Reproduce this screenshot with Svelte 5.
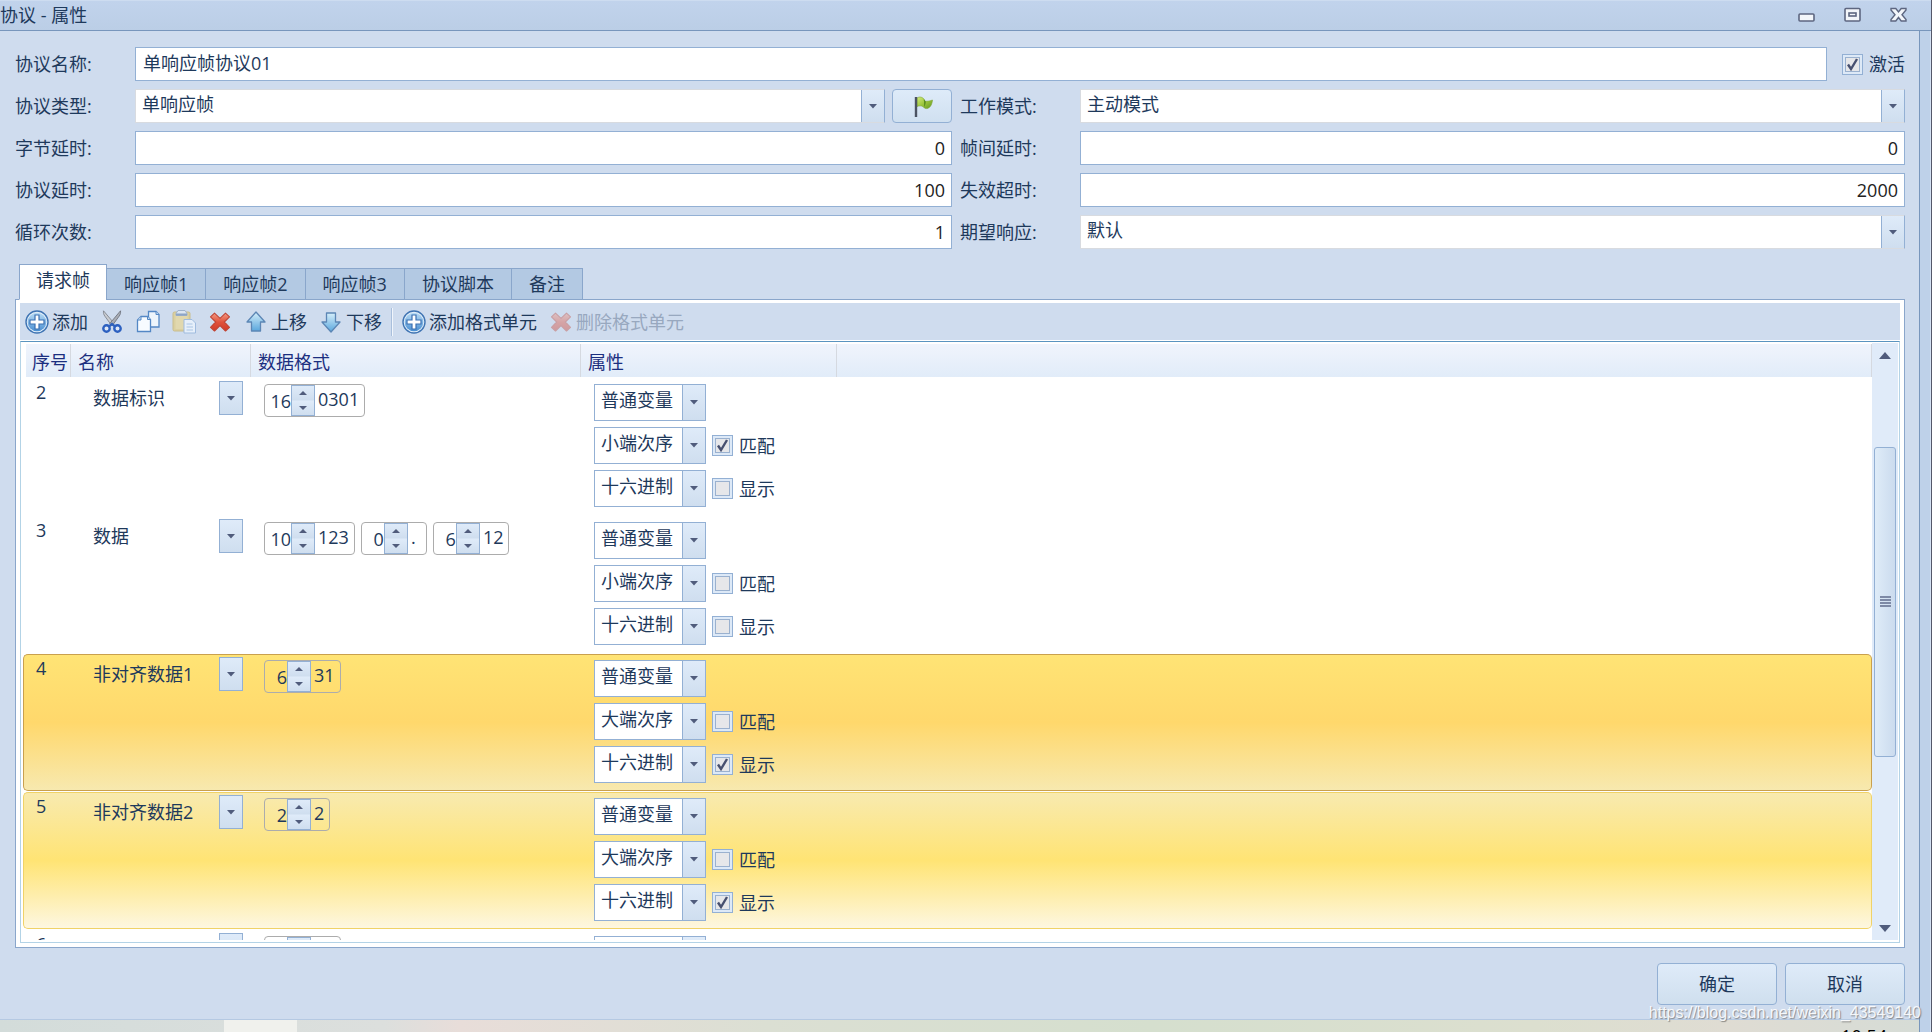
<script>
    let protocol = $state({
        name: "单响应帧协议01",
        active: true,
        type: "单响应帧",
        mode: "主动模式",
        byteDelay: 0,
        frameDelay: 0,
        delay: 100,
        timeout: 2000,
        loops: 1,
        expect: "默认"
    });

    let tabs = ["请求帧", "响应帧1", "响应帧2", "响应帧3", "协议脚本", "备注"];
    let activeTab = $state(0);
    let selected = $state(4);

    let rows = $state([
        { id: 2, name: "数据标识", parts: [{ size: 16, text: "0301" }], kind: "普通变量", order: "小端次序", base: "十六进制", match: true, show: false },
        { id: 3, name: "数据", parts: [{ size: 10, text: "123" }, { size: 0, text: "." }, { size: 6, text: "12" }], kind: "普通变量", order: "小端次序", base: "十六进制", match: false, show: false },
        { id: 4, name: "非对齐数据1", parts: [{ size: 6, text: "31" }], kind: "普通变量", order: "大端次序", base: "十六进制", match: false, show: true },
        { id: 5, name: "非对齐数据2", parts: [{ size: 2, text: "2" }], kind: "普通变量", order: "大端次序", base: "十六进制", match: false, show: true },
        { id: 6, name: "", parts: [{ size: 8, text: "12" }], kind: "普通变量", order: "大端次序", base: "十六进制", match: false, show: true }
    ]);
</script>

{#snippet plusIcon()}
    <svg class="icon" viewBox="0 0 24 24" aria-hidden="true">
        <defs>
            <linearGradient id="plus-fill" x1="0" y1="0" x2="0" y2="1">
                <stop offset="0" stop-color="#b9dcf5" />
                <stop offset="1" stop-color="#4a8fd2" />
            </linearGradient>
        </defs>
        <circle cx="12" cy="12" r="11" fill="#e4f0fa" stroke="#3f74b3" stroke-width="1.4" />
        <circle cx="12" cy="12" r="9.3" fill="url(#plus-fill)" />
        <path d="M10 5h4v5h5v4h-5v5h-4v-5H5v-4h5z" fill="#fff" stroke="#3b70b2" stroke-width="1.2" />
    </svg>
{/snippet}

{#snippet crossIcon()}
    <svg class="icon" viewBox="0 0 24 24" aria-hidden="true">
        <defs>
            <linearGradient id="cross-fill" x1="0" y1="0" x2="0" y2="1">
                <stop offset="0" stop-color="#f39a84" />
                <stop offset="0.5" stop-color="#e0523c" />
                <stop offset="1" stop-color="#cf3a28" />
            </linearGradient>
        </defs>
        <path d="M6.5 3.2 12 8.4l5.5-5.2 4 3.6L16.3 12l5.2 5.3-4 3.7L12 15.7 6.5 21l-4-3.7L7.7 12 2.5 6.8z" fill="url(#cross-fill)" stroke="#c04536" stroke-width="1.1" stroke-linejoin="round" />
    </svg>
{/snippet}

{#snippet arrowIcon(down)}
    <svg class="icon" viewBox="0 0 24 24" aria-hidden="true">
        <defs>
            <linearGradient id="arrow-fill" x1="0" y1="0" x2="0" y2="1">
                <stop offset="0" stop-color="#d5eefa" />
                <stop offset="1" stop-color="#5aa7dd" />
            </linearGradient>
        </defs>
        {#if down}
            <path d="M12 22 3 12h4.5V3h9v9H21z" fill="url(#arrow-fill)" stroke="#5c86b5" stroke-width="1.3" stroke-linejoin="round" />
        {:else}
            <path d="M12 2 21 12h-4.5v9h-9v-9H3z" fill="url(#arrow-fill)" stroke="#5c86b5" stroke-width="1.3" stroke-linejoin="round" />
        {/if}
    </svg>
{/snippet}

{#snippet combo(row, key, options)}
    <select class="combo" aria-label={key} bind:value={row[key]}>
        {#each options as option}
            <option>{option}</option>
        {/each}
    </select>
{/snippet}

<div class="window">
    <header class="titlebar">
        <h1>协议 - 属性</h1>
        <div class="window-buttons">
            <button aria-label="最小化">
                <svg viewBox="0 0 17 16"><rect x="1" y="7" width="15" height="7" rx="1" fill="#f3f6fa" stroke="#5d6680" stroke-width="1.6" /></svg>
            </button>
            <button aria-label="最大化">
                <svg viewBox="0 0 17 16">
                    <rect x="1" y="1.5" width="15" height="12.5" rx="1" fill="#f3f6fa" stroke="#5d6680" stroke-width="1.6" />
                    <rect x="5" y="6" width="7" height="3" fill="#f3f6fa" stroke="#5d6680" stroke-width="1.6" />
                </svg>
            </button>
            <button aria-label="关闭">
                <svg viewBox="0 0 17 16"><path d="M1 1.5h4.8l2.7 3.4 2.7-3.4H16V3l-4 4.7 4 4.8V14h-4.8l-2.7-3.5L5.8 14H1v-1.5l4-4.8L1 3z" fill="#f3f6fa" stroke="#5d6680" stroke-width="1.4" /></svg>
            </button>
        </div>
    </header>

    <div class="frame">
        <div class="column">
            <main>
                <section class="form">
                    <div class="field wide">
                        <label for="name">协议名称:</label>
                        <input id="name" type="text" bind:value={protocol.name} />
                        <label class="check"><input type="checkbox" bind:checked={protocol.active} />激活</label>
                    </div>
                    <div class="field left">
                        <label for="type">协议类型:</label>
                        <select id="type" class="plain" bind:value={protocol.type}>
                            <option>单响应帧</option>
                            <option>多响应帧</option>
                        </select>
                        <button class="flag" aria-label="标记">
                            <svg viewBox="-2 -1 24 24" aria-hidden="true">
                                <defs>
                                    <linearGradient id="flag-fill" x1="0" y1="0" x2="1" y2="1">
                                        <stop offset="0" stop-color="#d3ec7a" />
                                        <stop offset="0.5" stop-color="#9cc63c" />
                                        <stop offset="1" stop-color="#5f9420" />
                                    </linearGradient>
                                </defs>
                                <path d="M5 3c3-2 5.500-.5 7 1v2c2.500.6 5.500.2 8.500-1-.3 3.500-1.500 7-4.500 8.300-1.800.7-3.500.1-4.500-1.300-2-1.600-4.500-1.300-6.500-.5z" fill="url(#flag-fill)" stroke="#7da436" stroke-width=".6" />
                                <path d="M12 4.100v8l-.5.400c1.500-1.500 2.300-3.500 2.400-5.700z" fill="#5c8f1f" />
                                <path d="M4 2v20" stroke="#4b5362" stroke-width="2.4" />
                            </svg>
                        </button>
                    </div>
                    <div class="field">
                        <label for="mode">工作模式:</label>
                        <select id="mode" class="plain" bind:value={protocol.mode}>
                            <option>主动模式</option>
                            <option>被动模式</option>
                        </select>
                    </div>
                    <div class="field left">
                        <label for="byte-delay">字节延时:</label>
                        <input id="byte-delay" class="num" type="text" bind:value={protocol.byteDelay} />
                    </div>
                    <div class="field">
                        <label for="frame-delay">帧间延时:</label>
                        <input id="frame-delay" class="num" type="text" bind:value={protocol.frameDelay} />
                    </div>
                    <div class="field left">
                        <label for="delay">协议延时:</label>
                        <input id="delay" class="num" type="text" bind:value={protocol.delay} />
                    </div>
                    <div class="field">
                        <label for="timeout">失效超时:</label>
                        <input id="timeout" class="num" type="text" bind:value={protocol.timeout} />
                    </div>
                    <div class="field left">
                        <label for="loops">循环次数:</label>
                        <input id="loops" class="num" type="text" bind:value={protocol.loops} />
                    </div>
                    <div class="field">
                        <label for="expect">期望响应:</label>
                        <select id="expect" class="plain" bind:value={protocol.expect}>
                            <option>默认</option>
                        </select>
                    </div>
                </section>

                <nav class="tabs">
                    {#each tabs as tab, i}
                        <button class:active={i === activeTab} onclick={() => (activeTab = i)}>{tab}</button>
                    {/each}
                </nav>

                <section class="panel">
                    <div class="toolbar">
                        <button>{@render plusIcon()}添加</button>
                        <button aria-label="剪切">
                            <svg class="icon" viewBox="0 0 24 24" aria-hidden="true">
                                <path d="M3.500.8c-.3 2 .2 3.800 1.300 5.300l6.700 9.200 2.200-2.500z" fill="#c9ccd1" stroke="#777c85" stroke-width=".8" />
                                <path d="M20.500.8c.3 2-.2 3.800-1.300 5.300l-7.200 9.900-2.200-2.500z" fill="#a9adb5" stroke="#666b75" stroke-width=".8" />
                                <path d="M9.500 14.500 12 12.500l2.500 2 2 1.500-1.500 2-3-2.500L9 18l-1.500-2z" fill="#2e61bd" />
                                <circle cx="6.5" cy="18.5" r="3.2" fill="#dfe8f6" stroke="#2c60c0" stroke-width="2.4" />
                                <circle cx="17.5" cy="18.5" r="3.2" fill="#dfe8f6" stroke="#2c60c0" stroke-width="2.4" />
                            </svg>
                        </button>
                        <button aria-label="复制">
                            <svg class="icon" viewBox="0 0 24 24" aria-hidden="true">
                                <path d="M12.5 1.5H20l3 3V17H12.5z" fill="#edf5fc" stroke="#5387c5" stroke-width="1.3" />
                                <path d="M20 1.5v3h3" fill="#c4dbf2" stroke="#5387c5" />
                                <path d="M5 6.5h6.5l3 3v12h-13V10z" fill="#f7fbff" stroke="#5387c5" stroke-width="1.3" />
                                <path d="M5 6.500V10H1.500M11.500 6.500v3h3" fill="#c4dbf2" stroke="#5387c5" />
                            </svg>
                        </button>
                        <button aria-label="粘贴" disabled>
                            <svg class="icon" viewBox="0 0 24 24" aria-hidden="true">
                                <rect x="1" y="2" width="17" height="19" rx="1.5" fill="#dbd0a0" stroke="#c9bd8d" />
                                <rect x="3.5" y="5" width="12" height="14" fill="#e1d8ae" />
                                <path d="M4 3.500 6 .5h7l2 3v2H4z" fill="#dce6f2" stroke="#9fb2cb" />
                                <path d="M4 4.500h11" stroke="#8da5c6" stroke-width="2" />
                                <path d="M12 9.500h8l3.500 3.500v10H12z" fill="#e6effa" stroke="#9fbbde" />
                                <path d="M14.500 14h6M14.500 17h6.500M14.500 20h6.500" stroke="#aac5e3" stroke-width="1.2" />
                            </svg>
                        </button>
                        <button aria-label="删除">{@render crossIcon()}</button>
                        <button>{@render arrowIcon(false)}上移</button>
                        <button>{@render arrowIcon(true)}下移</button>
                        <span class="separator"></span>
                        <button>{@render plusIcon()}添加格式单元</button>
                        <button class="faded" disabled>{@render crossIcon()}删除格式单元</button>
                    </div>

                    <div class="grid">
                        <div class="scroll-area">
                            <table>
                                <colgroup>
                                    <col class="c-id" /><col class="c-name" /><col class="c-format" /><col class="c-props" /><col />
                                </colgroup>
                                <thead>
                                    <tr><th>序号</th><th>名称</th><th>数据格式</th><th>属性</th><th></th></tr>
                                </thead>
                                <tbody>
                                    {#each rows as row (row.id)}
                                        <tr class:selected={row.id === selected} class:related={row.id === 5} onclick={() => (selected = row.id)}>
                                            <td class="id">{row.id}</td>
                                            <td class="name">
                                                <select class="name-combo" aria-label="名称" bind:value={row.name}>
                                                    <option>{row.name}</option>
                                                </select>
                                            </td>
                                            <td>
                                                <div class="formats">
                                                    {#each row.parts as part}
                                                        <div class="format" class:long={part.size > 9}>
                                                            <input type="text" aria-label="位数" bind:value={part.size} />
                                                            <div class="spin">
                                                                <button aria-label="增加" onclick={() => part.size++}><i class="up"></i></button>
                                                                <button aria-label="减少" onclick={() => part.size--}><i class="dn"></i></button>
                                                            </div>
                                                            <span>{part.text}</span>
                                                        </div>
                                                    {/each}
                                                </div>
                                            </td>
                                            <td>
                                                <div class="props">
                                                    <div>{@render combo(row, "kind", ["普通变量"])}</div>
                                                    <div>
                                                        {@render combo(row, "order", ["小端次序", "大端次序"])}
                                                        <label class="check"><input type="checkbox" bind:checked={row.match} />匹配</label>
                                                    </div>
                                                    <div>
                                                        {@render combo(row, "base", ["十六进制", "十进制"])}
                                                        <label class="check"><input type="checkbox" bind:checked={row.show} />显示</label>
                                                    </div>
                                                </div>
                                            </td>
                                            <td></td>
                                        </tr>
                                    {/each}
                                </tbody>
                            </table>
                        </div>
                        <div class="scrollbar">
                            <button aria-label="向上滚动"><i class="up"></i></button>
                            <div class="track">
                                <div class="thumb"><i></i><i></i><i></i><i></i></div>
                            </div>
                            <button aria-label="向下滚动"><i class="dn"></i></button>
                        </div>
                    </div>
                </section>

                <footer>
                    <button>确定</button>
                    <button>取消</button>
                </footer>
            </main>
            <div class="taskbar">
                <span class="task"></span>
                <time>10:54</time>
            </div>
        </div>
    </div>
    <div class="watermark">https://blog.csdn.net/weixin_43549140</div>
</div>

<style>
    :global(body) { margin: 0; }
    .window {
        position: relative;
        display: flex;
        flex-direction: column;
        height: 100vh;
        box-sizing: border-box;
        border-right: 1px solid #55586a;
        background: #bed1e9;
        color: #1e395b;
        font: 18px/24px "Open Sans", "Noto Sans CJK SC", sans-serif;
        overflow: hidden;
    }
    .window * { box-sizing: border-box; }
    button, input, select { font: inherit; color: inherit; margin: 0; padding: 0; }
    button { border: 0; background: none; }

    .titlebar {
        display: flex;
        align-items: center;
        justify-content: space-between;
        height: 31px;
        padding: 0 24px 2px 0;
        border-top: 1px solid #cddcf0;
        border-bottom: 1px solid #7896bc;
        background: linear-gradient(#c1d3ec, #bbcee6);
    }
    h1 { margin: 0; font-size: 18px; line-height: 24px; font-weight: 400; }
    .window-buttons { display: flex; gap: 29px; }
    .window-buttons button { width: 17px; height: 16px; }
    .window-buttons svg { display: block; width: 17px; height: 16px; }

    .frame { flex: 1; min-height: 0; display: flex; padding-right: 10px; border-right: 1px solid #d3e0f2; }
    .column { flex: 1; min-width: 0; display: flex; flex-direction: column; border-right: 1px solid #7896bc; }
    main {
        flex: 1;
        min-height: 0;
        display: flex;
        flex-direction: column;
        padding: 16px 14px 14px 15px;
        border-bottom: 1px solid #b5c9e2;
        background: #cfdcee;
    }

    .form { display: grid; grid-template-columns: 1fr 1fr; row-gap: 8px; }
    .field { display: flex; align-items: center; height: 34px; }
    .field.wide { grid-column: span 2; }
    .field.left { padding-right: 8px; }
    .field > label:first-child { width: 120px; flex: none; }
    .field > input, .field > select { flex: 1; min-width: 0; height: 34px; }
    .field > input { padding: 0 7px 4px; border: 1px solid #93b0d4; background: #fff; outline: 0; }
    .field > input.num { text-align: right; color: #222; padding-right: 6px; padding-bottom: 0; }

    select {
        appearance: none;
        border: 1px solid #93b0d4;
        border-radius: 0;
        outline: 0;
        background:
            url("data:image/svg+xml,%3Csvg xmlns='http://www.w3.org/2000/svg' width='8' height='5'%3E%3Cpath d='M0 0h8L4 4.500z' fill='%23505c7c'/%3E%3C/svg%3E") right 7px center / 8px 5px no-repeat,
            linear-gradient(#93b0d4, #93b0d4) right 22px top / 1px 100% no-repeat,
            linear-gradient(#dfebf9, #cfdeef) right top / 22px 100% no-repeat,
            #fff;
    }
    select.plain {
        padding: 0 30px 4px 6px;
        border-color: #d8dbe0;
        border-right-color: #93b0d4;
    }

    .check { display: flex; align-items: center; gap: 6px; }
    .wide .check { margin-left: 15px; }
    .check input {
        appearance: none;
        width: 21px;
        height: 21px;
        border: 1px solid #93b0d4;
        background: #dde9f7;
        padding: 2px;
    }
    .check input::before {
        content: "";
        display: block;
        width: 15px;
        height: 15px;
        border: 1px solid #9ab1cf;
        background: #e6e7ea;
        box-sizing: border-box;
    }
    .check input:checked::before {
        background: #e6e7ea url("data:image/svg+xml,%3Csvg xmlns='http://www.w3.org/2000/svg' width='13' height='13'%3E%3Cpath d='M2 6.500l3 4.500L11 1' fill='none' stroke='%23475070' stroke-width='2.400'/%3E%3C/svg%3E") center / 13px 13px no-repeat;
    }

    .flag {
        display: grid;
        place-items: center;
        width: 60px;
        height: 34px;
        margin-left: 7px;
        border: 1px solid #93b0d4;
        border-radius: 4px;
        background: linear-gradient(#deebf9, #d0e0f0);
    }
    .flag svg { width: 24px; height: 24px; }

    .tabs { display: flex; align-items: flex-end; margin: 15px 0 -1px 4px; position: relative; }
    .tabs button {
        height: 32px;
        margin-left: -1px;
        padding: 0 17px;
        border: 1px solid #8aa6cb;
        background: #b3c9e3;
    }
    .tabs button.active { height: 36px; margin-left: 0; padding: 0 16px 4px; border-bottom-color: #fff; background: #fff; }

    .panel {
        flex: 1;
        min-height: 0;
        display: flex;
        flex-direction: column;
        padding: 3px 4px 4px;
        border: 1px solid #8aa6cb;
        background: #fff;
    }
    .toolbar { display: flex; align-items: center; gap: 12px; height: 37px; padding-left: 5px; background: #cfdcee; }
    .toolbar button { display: flex; align-items: center; gap: 3px; }
    .icon { width: 24px; height: 24px; flex: none; }
    .separator { width: 2px; height: 28px; margin: 0 -3px; border-left: 1px solid #a9bfdc; background: #f0f5fb; }
    .faded { color: #98a8bf; }
    .faded .icon { opacity: 0.4; }

    .grid {
        flex: 1;
        min-height: 0;
        display: flex;
        margin-top: 1px;
        padding: 1px 1px 2px 2px;
        border: 1px solid #b3d3e6;
        border-top-color: #5a94bf;
    }
    .scroll-area { flex: 1; min-width: 0; overflow: hidden; }
    table { width: 100%; table-layout: fixed; border-collapse: separate; border-spacing: 0 1px; }
    .c-id { width: 48px; }
    .c-name { width: 180px; }
    .c-format { width: 330px; }
    .c-props { width: 256px; }
    th {
        height: 33px;
        padding: 2px 0 0 7px;
        border-right: 1px solid #d5d9e0;
        background: linear-gradient(#f0f4fc, #e1ecf9);
        color: #1c2f80;
        font-weight: 400;
        text-align: left;
        white-space: nowrap;
    }
    th:first-child { padding-left: 6px; border-left: 3px solid #fff; }
    td { height: 137px; padding: 0; border: 1px solid transparent; border-width: 1px 0; vertical-align: top; }
    td:first-child { border-left-width: 1px; border-radius: 5px 0 0 5px; }
    td:last-child { border-right-width: 1px; border-radius: 0 5px 5px 0; }
    .related td { background: linear-gradient(#f8eab0, #ffe474 50%, #fdf7e2) border-box; border-color: #f0d267; }
    .selected td { background: linear-gradient(#ffe475, #ffd86c 50%, #f7e9b0) border-box; border-color: #c9a04e; }
    td.id { padding: 1px 0 0 12px; }
    td.name { padding: 2px 8px 0 22px; }
    .name-combo {
        width: 150px;
        height: 34px;
        border: 0;
        padding-right: 26px;
        background:
            url("data:image/svg+xml,%3Csvg xmlns='http://www.w3.org/2000/svg' width='8' height='5'%3E%3Cpath d='M0 0h8L4 4.500z' fill='%23505c7c'/%3E%3C/svg%3E") right 8px center / 8px 5px no-repeat,
            linear-gradient(#dfebf9, #cfdeef) right 1px center / 22px 32px no-repeat,
            linear-gradient(#93b0d4, #93b0d4) right center / 24px 34px no-repeat;
    }

    .formats { display: flex; gap: 6px; padding: 5px 0 0 13px; }
    .format { display: flex; height: 33px; border: 1px solid #acacac; border-radius: 4px; }
    .format input { width: 22px; min-width: 0; border: 0; background: none; text-align: right; outline: 0; }
    .format.long input { width: 26px; }
    .format span { min-width: 18px; padding: 2px 5px 0 3px; }
    .spin { display: flex; flex-direction: column; width: 24px; border: 1px solid #93b0d4; background: linear-gradient(#dfebf9, #cfdeef 48%, #dfebf9 52%, #cfdeef); }
    .spin button { flex: 1; display: grid; place-items: center; }
    i { display: block; }
    .up { border: 4px solid transparent; border-top: 0; border-bottom: 4px solid #505c7c; }
    .dn { border: 4px solid transparent; border-bottom: 0; border-top: 4px solid #505c7c; }

    .props { display: grid; gap: 6px; padding: 5px 0 0 13px; }
    .props > div { display: flex; align-items: center; gap: 6px; height: 37px; }
    .combo { width: 112px; height: 37px; padding: 0 24px 5px 6px; }

    .scrollbar { display: flex; flex-direction: column; width: 26px; background: #e0ebf9; }
    .scrollbar > button { height: 24px; display: grid; place-items: center; }
    .scrollbar .up { border-width: 0 6px 7px; }
    .scrollbar .dn { border-width: 7px 6px 0; }
    .track { flex: 1; display: flex; flex-direction: column; padding: 80px 2px 0; }
    .thumb {
        display: flex;
        flex-direction: column;
        align-items: center;
        justify-content: center;
        gap: 1px;
        height: 66%;
        border: 1px solid #93b0d4;
        border-radius: 3px;
        background: linear-gradient(90deg, #dfecf8, #cbdbee);
    }
    .thumb i { width: 11px; height: 2px; background: #7e8aa6; }

    footer { display: flex; justify-content: flex-end; gap: 8px; padding-top: 15px; }
    footer button {
        width: 120px;
        height: 42px;
        border: 1px solid #93b0d4;
        border-radius: 4px;
        background: linear-gradient(#dfebf9, #cfdfee);
    }

    .taskbar {
        display: flex;
        justify-content: space-between;
        height: 12px;
        padding: 0 32px 0 224px;
        overflow: hidden;
        background: linear-gradient(90deg, #d3dcda, #dcdfdd 20%, #e8ddd9 24%, #dbdfd3 40%, #d5dfce 60%, #dcdfcf 80%, #dfdcd3 90%, #d6dcd6);
    }
    .task { width: 73px; background: #f0f1ed; }
    time { padding-top: 4px; color: #000; font-size: 18px; line-height: 24px; }

    .watermark {
        position: absolute;
        right: 10px;
        bottom: 9px;
        color: rgba(255, 255, 255, 0.9);
        font: 16px/20px "Liberation Sans", sans-serif;
        text-shadow: 1px 1px 1px rgba(80, 80, 80, 0.6);
        pointer-events: none;
    }
</style>
